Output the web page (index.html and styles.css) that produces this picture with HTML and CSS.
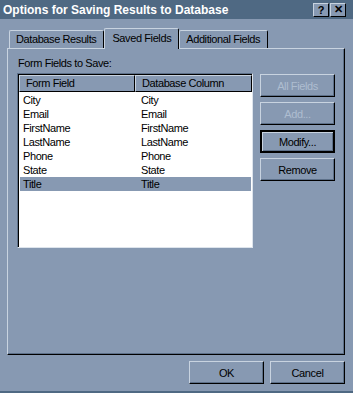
FILE: index.html
```html
<!DOCTYPE html>
<html lang="en">
<head>
    <meta charset="UTF-8">
    <title>Options for Saving Results to Database</title>
    <link rel="stylesheet" href="styles.css">
</head>
<body>
    <div class="window">
        <!-- title bar -->
        <div class="titlebar">
            <span class="title">Options for Saving Results to Database</span>
            <div class="caption-btns">
                <span class="cap-btn">?</span>
                <span class="cap-btn">&#10005;</span>
            </div>
        </div>

        <div class="dialog">
            <!-- tabs -->
            <div class="tabs">
                <span class="tab">Database Results</span>
                <span class="tab active">Saved Fields</span>
                <span class="tab">Additional Fields</span>
            </div>

            <div class="panel">
                <div class="label">Form Fields to Save:</div>
                <div class="panel-body">
                    <div class="list">
                        <div class="list-head">
                            <span class="head-cell first">Form Field</span>
                            <span class="head-cell">Database Column</span>
                        </div>
                        <div class="rows">
                            <div class="row"><span>City</span><span>City</span></div>
                            <div class="row"><span>Email</span><span>Email</span></div>
                            <div class="row"><span>FirstName</span><span>FirstName</span></div>
                            <div class="row"><span>LastName</span><span>LastName</span></div>
                            <div class="row"><span>Phone</span><span>Phone</span></div>
                            <div class="row"><span>State</span><span>State</span></div>
                            <div class="row selected"><span>Title</span><span>Title</span></div>
                        </div>
                    </div>
                    <div class="side-btns">
                        <button class="btn" disabled>All Fields</button>
                        <button class="btn" disabled>Add...</button>
                        <button class="btn default">Modify...</button>
                        <button class="btn">Remove</button>
                    </div>
                </div>
            </div>

            <div class="footer">
                <button class="btn">OK</button>
                <button class="btn">Cancel</button>
            </div>
        </div>
    </div>
</body>
</html>
```

FILE: styles.css
```css
body {
    margin: 0;
    font-family: "Liberation Sans", Arial, sans-serif;
    font-size: 11px;
    letter-spacing: -0.4px;
    color: #000;
}
.window {
    width: 353px;
    height: 393px;
    box-sizing: border-box;
    background-color: #8799b2;
    border-bottom: 2px solid #4f6983;
}
.titlebar {
    height: 19px;
    display: flex;
    align-items: center;
    justify-content: space-between;
    padding: 0 7px 0 3px;
    background-color: #4f6983;
}
.title {
    color: #fff;
    font-size: 12px;
    font-weight: bold;
    letter-spacing: 0;
}
.caption-btns {
    display: flex;
    gap: 1px;
}
.cap-btn {
    width: 14px;
    height: 12px;
    box-sizing: content-box;
    display: flex;
    align-items: center;
    justify-content: center;
    background-color: #8799b2;
    border: 1px solid;
    border-color: #c8d3e0 #000 #000 #c8d3e0;
    font-size: 11px;
    font-weight: bold;
    letter-spacing: 0;
}
.dialog {
    padding: 9px 8px 0 7px;
}
.tabs {
    display: flex;
    align-items: flex-end;
    height: 20px;
    padding-left: 2px;
}
.tab {
    height: 18px;
    box-sizing: border-box;
    padding: 2px 7px 0 6px;
    border: 1px solid #c8d3e0;
    border-right-color: #000;
    border-bottom: none;
    border-radius: 2px 2px 0 0;
    background-color: #8799b2;
}
.tab.active {
    height: 21px;
    margin-bottom: -1px;
    padding: 3px 7px 0 7px;
    position: relative;
    z-index: 1;
}
.panel {
    width: 338px;
    height: 307px;
    box-sizing: border-box;
    border: 1px solid;
    border-color: #c8d3e0 #000 #000 #c8d3e0;
    box-shadow: inset -1px -1px #5d7089;
    padding: 8px 0 0 9px;
}
.label {
    height: 13px;
    line-height: 13px;
    padding-left: 1px;
    margin-bottom: 3px;
}
.panel-body {
    display: flex;
    gap: 7px;
}
.list {
    width: 236px;
    height: 175px;
    box-sizing: border-box;
    background-color: #fff;
    border: 1px solid;
    border-color: #5d7089 #dde4ec #dde4ec #5d7089;
    box-shadow: inset 1px 1px #000;
    padding: 1px 0 0 1px;
}
.list-head {
    display: flex;
    height: 17px;
}
.head-cell {
    box-sizing: border-box;
    height: 17px;
    line-height: 15px;
    padding-left: 6px;
    background-color: #8799b2;
    border: 1px solid;
    border-color: #c8d3e0 #000 #000 #c8d3e0;
    flex: 1;
}
.head-cell.first {
    flex: 0 0 116px;
}
.rows {
    padding: 1px 1px 0 1px;
}
.row {
    display: grid;
    grid-template-columns: 118px 1fr;
    height: 14px;
    line-height: 14px;
    padding-left: 3px;
}
.row.selected {
    background-color: #8799b2;
}
.side-btns {
    display: flex;
    flex-direction: column;
    gap: 5px;
    padding-top: 1px;
}
.btn {
    width: 75px;
    height: 23px;
    box-sizing: border-box;
    padding: 0;
    font-family: "Liberation Sans", Arial, sans-serif;
    font-size: 11px;
    letter-spacing: -0.4px;
    color: #000;
    background-color: #8799b2;
    border: 1px solid;
    border-color: #c8d3e0 #000 #000 #c8d3e0;
    box-shadow: inset -1px -1px #5d7089;
}
.btn:disabled {
    color: #aebdd0;
}
.btn.default {
    border: 2px solid #000;
    box-shadow: inset 1px 1px #c8d3e0, inset -1px -1px #5d7089;
}
.footer {
    display: flex;
    justify-content: flex-end;
    gap: 6px;
    margin-top: 6px;
}
```
